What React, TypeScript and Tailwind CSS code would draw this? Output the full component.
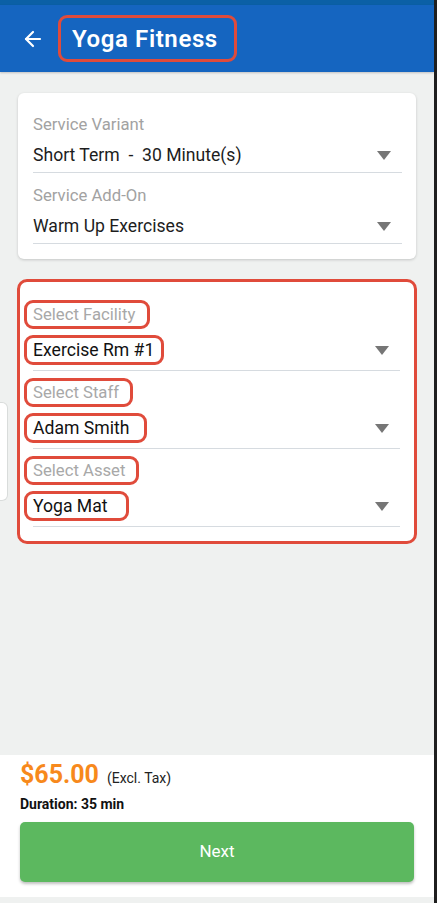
import { ArrowLeft } from "lucide-react";
import type { ReactNode } from "react";

const FONT = { fontFamily: "Roboto, 'Noto Sans', Arial, sans-serif" };

function Caret() {
  return (
    <svg width="14" height="9" viewBox="0 0 14 9" className="shrink-0">
      <path d="M0 0 L14 0 L7 9 Z" fill="#767676" />
    </svg>
  );
}

// red annotation frame around a label or value
function Marked({ children, className = "" }: { children: ReactNode; className?: string }) {
  return (
    <span
      className={`-ml-[9px] inline-flex items-center rounded-[9px] border-[3px] border-[#e04b3b] pl-[6px] ${className}`}
    >
      {children}
    </span>
  );
}

function PlainField({ label, value }: { label: string; value: string }) {
  return (
    <div className="flex flex-col">
      <div className="flex h-[23px] items-center text-[16.7px] text-[#a2a2a2]">{label}</div>
      <div className="mt-[7px] flex h-[24px] items-center justify-between pr-[11px] text-[17.6px] text-[#1d1d1d]">
        <span className="whitespace-pre">{value}</span>
        <Caret />
      </div>
      <div className="mt-[5px] h-px bg-[#d6dbe0]" />
    </div>
  );
}

function MarkedField({
  label,
  value,
  labelBox,
  valueBox,
}: {
  label: string;
  value: string;
  labelBox: string;
  valueBox: string;
}) {
  return (
    <div className="flex flex-col">
      <div>
        <Marked className={`h-[29px] text-[16.7px] text-[#a8a8a8] ${labelBox}`}>{label}</Marked>
      </div>
      <div className="mt-[6px] flex items-center justify-between pr-[11px]">
        <Marked className={`h-[30px] text-[17.6px] text-[#111] ${valueBox}`}>{value}</Marked>
        <Caret />
      </div>
      <div className="mt-[5px] h-px bg-[#d6dbe0]" />
    </div>
  );
}

export default function App() {
  return (
    <div className="flex h-[903px] w-[437px] overflow-hidden bg-[#eff1f0]" style={FONT}>
      <div className="flex w-[434px] flex-col">
        <div className="h-[5px] bg-[#0b60a6]" />
        <header className="flex h-[67px] items-center bg-[#1565c0] shadow-[0_1px_2px_rgba(0,0,0,0.2)]">
          <ArrowLeft className="ml-[21px] h-[24px] w-[24px] text-white" strokeWidth={2.2} />
          <div className="ml-[13px] flex h-[47px] items-center rounded-[9px] border-[3px] border-[#e04b3b] pr-[16px] pl-[11px]">
            <span className="text-[24px] font-semibold tracking-[0.6px] text-white">Yoga Fitness</span>
          </div>
        </header>

        <main className="relative flex-1">
          <div className="absolute top-[330px] left-0 h-[99px] w-[8px] rounded-r-[6px] border border-l-0 border-[#d9dcdb] bg-white" />

          <section className="mx-[18px] mt-[21px] flex flex-col gap-[11px] rounded-[6px] bg-white pt-[20px] pr-[14px] pb-[15px] pl-[15px] shadow-[0_1px_3px_rgba(0,0,0,0.18)]">
            <PlainField label="Service Variant" value="Short Term  -  30 Minute(s)" />
            <PlainField label="Service Add-On" value="Warm Up Exercises" />
          </section>

          <section className="mx-[17px] mt-[20px] flex flex-col gap-[7px] rounded-[10px] border-[3px] border-[#e04b3b] bg-white pt-[18px] pr-[14px] pb-[14px] pl-[13px]">
            <MarkedField label="Select Facility" value="Exercise Rm #1" labelBox="w-[126px]" valueBox="w-[140px]" />
            <MarkedField label="Select Staff" value="Adam Smith" labelBox="w-[109px]" valueBox="w-[123px]" />
            <MarkedField label="Select Asset" value="Yoga Mat" labelBox="w-[115px]" valueBox="w-[105px]" />
          </section>
        </main>

        <footer className="flex h-[142px] flex-col bg-white px-[20px] pt-[5px]">
          <div className="flex items-baseline gap-[8px] leading-[30px]">
            <span className="text-[25px] font-bold text-[#f7891c]">$65.00</span>
            <span className="text-[14px] text-[#222]">(Excl. Tax)</span>
          </div>
          <div className="mt-[1px] text-[14px] leading-[20px] font-bold text-[#111]">Duration: 35 min</div>
          <button className="mt-[8px] flex h-[60px] w-[394px] items-center justify-center rounded-[5px] bg-[#5cb85f] text-[17px] text-white shadow-[0_2px_3px_rgba(0,0,0,0.25)]">
            Next
          </button>
        </footer>
        <div className="h-[6px] bg-[#eff1f0]" />
      </div>
      <div className="w-[3px] bg-[#1f1f1f]" />
    </div>
  );
}
